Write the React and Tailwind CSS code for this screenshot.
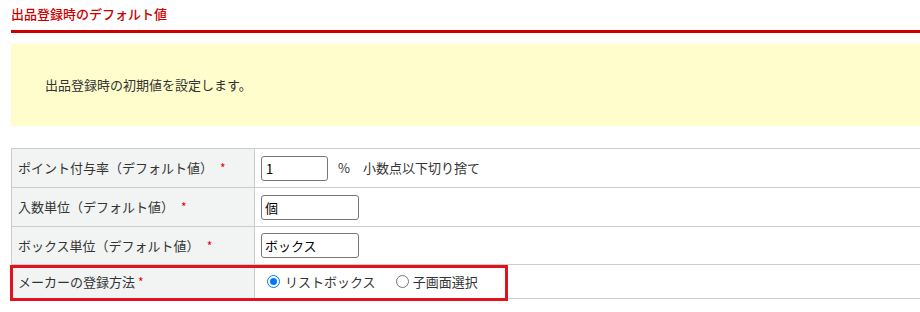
import React from "react";

const rows = [
  { label: "ポイント付与率（デフォルト値）", kind: "rate", h: "h-[38px]" },
  { label: "入数単位（デフォルト値）", kind: "text", value: "個", h: "h-[38px]" },
  { label: "ボックス単位（デフォルト値）", kind: "text", value: "ボックス", h: "h-[37px]" },
  { label: "メーカーの登録方法", kind: "radio", h: "h-[33px]" },
];

const Field = ({ row }) => {
  if (row.kind === "rate") {
    return (
      <div className="flex items-center">
        <input
          type="text"
          defaultValue="1"
          className="w-[67px] h-[25px] border border-[#767676] rounded-[3px] px-[4px] text-[13px] text-black bg-white outline-none"
        />
        <span className="ml-[10px]">%</span>
        <span className="ml-[13px]">小数点以下切り捨て</span>
      </div>
    );
  }
  if (row.kind === "text") {
    return (
      <input
        type="text"
        defaultValue={row.value}
        className="w-[98px] h-[25px] border border-[#767676] rounded-[3px] px-[3px] text-[13px] text-black bg-white outline-none"
      />
    );
  }
  // ラジオボタン
  return (
    <div className="flex items-center pl-[6px]">
      <span className="w-[13px] h-[13px] rounded-full border-[1.5px] border-[#0075ff] flex items-center justify-center">
        <span className="w-[7px] h-[7px] rounded-full bg-[#0075ff]" />
      </span>
      <span className="ml-[5px]">リストボックス</span>
      <span className="ml-[20px] w-[13px] h-[13px] rounded-full border border-[#767676]" />
      <span className="ml-[4px]">子画面選択</span>
    </div>
  );
};

export default function App() {
  return (
    <div
      className="pl-[11px] bg-white text-[#333] text-[13px] min-h-[312px] overflow-hidden"
      style={{ fontFamily: '"Noto Sans CJK JP", "Noto Sans", sans-serif' }}
    >
      <h2 className="pt-[5px] pb-[7px] leading-[18px] text-[13px] font-medium text-[#cc0000] border-b-[3px] border-[#cc0000]">
        出品登録時のデフォルト値
      </h2>

      <div className="mt-[11px] h-[82px] bg-[#fffdcc] flex items-center pl-[34px]">
        出品登録時の初期値を設定します。
      </div>

      <div className="relative mt-[22px] border-t border-[#cccccc]">
        {rows.map((row) => (
          <div key={row.label} className="flex border-b border-[#cccccc]">
            <div
              className={`w-[244px] shrink-0 ${row.h} bg-[#f2f3f3] border-x border-[#cccccc] flex items-center pl-[6px]`}
            >
              <span>{row.label}</span>
              <span
                className={`text-[#ee0000] text-[12px] ${
                  row.kind === "radio" ? "ml-[3px]" : "ml-[7px]"
                }`}
              >
                *
              </span>
            </div>
            <div className="flex-1 flex items-center pl-[6px]">
              <Field row={row} />
            </div>
          </div>
        ))}

        <div className="absolute left-[-1px] top-[116px] w-[498px] h-[36px] border-[3px] border-[#e3131d] pointer-events-none" />
      </div>
    </div>
  );
}
